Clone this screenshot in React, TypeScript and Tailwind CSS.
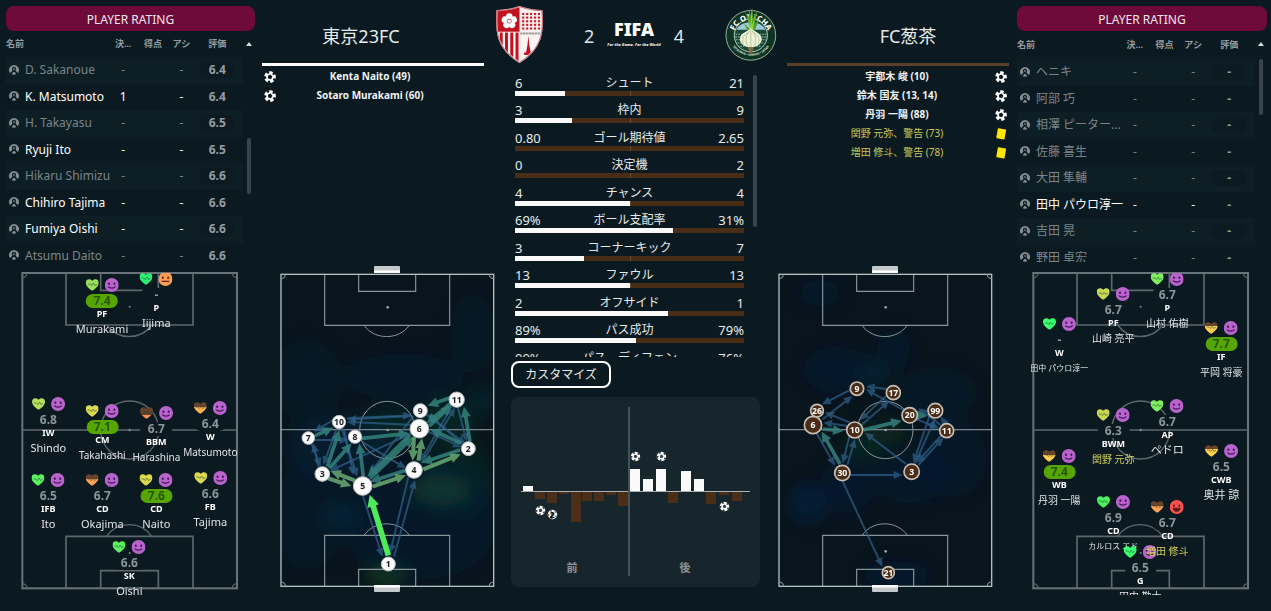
import React, { useId } from "react";

type Rating = { name: string; key: string; assist: string; rating: string; played?: boolean };
type Mood = "happy" | "neutral" | "joy";
type Token = {
  x: number;
  y: number;
  rating: string;
  role: string;
  name: string;
  heart: string;
  drained?: number;
  mood?: Mood;
  booked?: boolean;
  size?: "narrow" | "tiny";
};
type Pass = [number, number, number, number];
type Node = [string, number, number, number];
type Blob = [number, number, number, number, string, number];

const homeRatings: Rating[] = [
  { name: "D. Sakanoue", key: "-", assist: "-", rating: "6.4" },
  { name: "K. Matsumoto", key: "1", assist: "-", rating: "6.4", played: true },
  { name: "H. Takayasu", key: "-", assist: "-", rating: "6.5" },
  { name: "Ryuji Ito", key: "-", assist: "-", rating: "6.5", played: true },
  { name: "Hikaru Shimizu", key: "-", assist: "-", rating: "6.6" },
  { name: "Chihiro Tajima", key: "-", assist: "-", rating: "6.6", played: true },
  { name: "Fumiya Oishi", key: "-", assist: "-", rating: "6.6", played: true },
  { name: "Atsumu Daito", key: "-", assist: "-", rating: "6.6" },
];

const awayRatings: Rating[] = [
  { name: "へニキ", key: "-", assist: "-", rating: "-" },
  { name: "阿部 巧", key: "-", assist: "-", rating: "-" },
  { name: "相澤 ピーター...", key: "-", assist: "-", rating: "-" },
  { name: "佐藤 喜生", key: "-", assist: "-", rating: "-" },
  { name: "大田 隼輔", key: "-", assist: "-", rating: "-" },
  { name: "田中 パウロ淳一", key: "-", assist: "-", rating: "-", played: true },
  { name: "吉田 晃", key: "-", assist: "-", rating: "-" },
  { name: "野田 卓宏", key: "-", assist: "-", rating: "-" },
];

const homeTokens: Token[] = [
  { x: 306, y: 56, rating: "7.4", role: "PF", name: "Murakami", heart: "#9be05a" },
  { x: 469, y: 38, rating: "-", role: "P", name: "Iijima", heart: "#2ef070", mood: "neutral" },
  { x: 145, y: 414, rating: "6.8", role: "IW", name: "Shindo", heart: "#b4e05a" },
  { x: 307, y: 435, rating: "7.1", role: "CM", name: "Takahashi", heart: "#dcd850", size: "narrow" },
  { x: 469, y: 441, rating: "6.7", role: "BBM", name: "Harashina", heart: "#ff8f50", drained: 65, size: "narrow" },
  { x: 631, y: 426, rating: "6.4", role: "W", name: "Matsumoto", heart: "#ffb050", drained: 40, size: "narrow" },
  { x: 145, y: 641, rating: "6.5", role: "IFB", name: "Ito", heart: "#5cf060" },
  { x: 307, y: 641, rating: "6.7", role: "CD", name: "Okajima", heart: "#ff9f50", drained: 38 },
  { x: 469, y: 641, rating: "7.6", role: "CD", name: "Naito", heart: "#dcd850" },
  { x: 631, y: 636, rating: "6.6", role: "FB", name: "Tajima", heart: "#dcd850" },
  { x: 388, y: 843, rating: "6.6", role: "SK", name: "Oishi", heart: "#5cf060" },
];

const awayTokens: Token[] = [
  { x: 307, y: 84, rating: "6.7", role: "PF", name: "山崎 亮平", heart: "#c8d850", size: "narrow" },
  { x: 469, y: 38, rating: "6.7", role: "P", name: "山村 佑樹", heart: "#7ef060", size: "narrow" },
  { x: 145, y: 174, rating: "-", role: "W", name: "田中 パウロ淳一", heart: "#3cff70", size: "tiny" },
  { x: 631, y: 186, rating: "7.7", role: "IF", name: "平岡 将豪", heart: "#ffd050", drained: 35, size: "narrow" },
  { x: 307, y: 448, rating: "6.3", role: "BWM", name: "関野 元弥", heart: "#c8d850", booked: true, size: "narrow" },
  { x: 469, y: 420, rating: "6.7", role: "AP", name: "ペドロ", heart: "#7ef060" },
  { x: 145, y: 570, rating: "7.4", role: "WB", name: "丹羽 一陽", heart: "#ffd050", drained: 40, size: "narrow" },
  { x: 631, y: 555, rating: "6.5", role: "CWB", name: "奥井 諒", heart: "#ffd050", drained: 35 },
  { x: 307, y: 708, rating: "6.9", role: "CD", name: "カルロス エド", heart: "#4cf060", size: "tiny" },
  { x: 388, y: 858, rating: "6.5", role: "G", name: "田中 勘太", heart: "#3cff70", size: "narrow" },
  { x: 469, y: 723, rating: "6.7", role: "CD", name: "増田 修斗", heart: "#ff9f50", drained: 40, mood: "joy", booked: true, size: "narrow" },
];

const stats = [
  { label: "シュート", home: "6", away: "21", share: 22 },
  { label: "枠内", home: "3", away: "9", share: 25 },
  { label: "ゴール期待値", home: "0.80", away: "2.65", share: 0 },
  { label: "決定機", home: "0", away: "2", share: 0 },
  { label: "チャンス", home: "4", away: "4", share: 50 },
  { label: "ボール支配率", home: "69%", away: "31%", share: 69 },
  { label: "コーナーキック", home: "3", away: "7", share: 30 },
  { label: "ファウル", home: "13", away: "13", share: 50 },
  { label: "オフサイド", home: "2", away: "1", share: 67 },
  { label: "パス成功", home: "89%", away: "79%", share: 53 },
  { label: "パス、ディフェン", home: "90%", away: "76%", share: 54 },
];

const momentum: [number, number][] = [
  [12, 6], [24, -7], [36, -11], [48, -2], [60, -30], [71, -9], [83, -9], [95, -3], [107, -14],
  [119, 23], [132, 13], [145, 23], [157, -11], [170, 21], [183, 13], [195, -12], [208, -3], [221, -9],
];

const homeNodes: Node[] = [
  ["1", 355, 912, 21], ["2", 595, 566, 21], ["3", 157, 642, 22], ["4", 432, 630, 25],
  ["5", 278, 678, 28], ["6", 448, 506, 28], ["7", 115, 534, 19], ["8", 255, 530, 20],
  ["9", 451, 452, 21], ["10", 207, 486, 20], ["11", 560, 419, 23],
];
const homeBlue: Pass[] = [
  [230, 475, 425, 466], [425, 468, 232, 478], [420, 494, 230, 486], [125, 552, 152, 620], [145, 620, 130, 550],
  [190, 480, 132, 515], [135, 540, 235, 540], [215, 505, 262, 650], [222, 505, 250, 645], [200, 505, 160, 615],
  [275, 545, 408, 625], [430, 468, 300, 640], [425, 520, 180, 632], [470, 465, 588, 552], [563, 440, 590, 545],
  [475, 515, 575, 562], [455, 610, 555, 443], [545, 440, 450, 605], [575, 550, 475, 462], [372, 890, 435, 660],
  [415, 652, 360, 880], [278, 705, 337, 890],
];
const homeTeal: Pass[] = [
  [275, 535, 418, 520], [300, 655, 430, 530], [420, 525, 292, 650], [280, 650, 268, 550], [178, 625, 245, 550],
  [172, 620, 208, 510], [570, 570, 455, 608], [575, 550, 480, 508], [600, 545, 582, 440], [540, 413, 473, 437],
  [540, 432, 470, 490], [478, 498, 545, 436], [410, 630, 300, 665], [135, 527, 190, 503],
];
const homeGreen: Pass[] = [
  [308, 680, 408, 646], [460, 628, 572, 583], [255, 662, 182, 633], [175, 655, 244, 678],
  [432, 532, 428, 602], [445, 602, 456, 535],
];

const awayNodes: Node[] = [
  ["9", 261, 386, 20], ["17", 370, 398, 21], ["26", 141, 452, 19], ["6", 129, 495, 26],
  ["10", 254, 510, 24], ["20", 419, 466, 23], ["99", 496, 452, 22], ["11", 530, 512, 21],
  ["30", 217, 639, 23], ["3", 425, 635, 23], ["21", 355, 938, 18],
];
const awayBlue: Pass[] = [
  [240, 390, 156, 433], [158, 478, 247, 408], [350, 387, 288, 379], [400, 450, 288, 388], [230, 497, 160, 488],
  [240, 488, 165, 457], [348, 408, 270, 480], [275, 495, 358, 422], [140, 520, 195, 617], [238, 530, 218, 610],
  [232, 615, 255, 537], [408, 612, 285, 518], [240, 645, 397, 645], [445, 615, 520, 533], [435, 610, 494, 478],
  [478, 470, 430, 608], [515, 525, 440, 608], [440, 478, 508, 505], [512, 495, 445, 445], [525, 490, 512, 470],
  [217, 662, 337, 920],
];
const awayTeal: Pass[] = [
  [158, 507, 220, 513], [280, 510, 395, 482], [210, 612, 155, 515], [440, 466, 472, 468],
];

const homeBlobs: Blob[] = [
  [510, 690, 90, 45, "#1d5c1e", 0.5], [350, 945, 60, 30, "#1d5c1e", 0.5], [560, 660, 110, 110, "#0f4a3c", 0.22],
  [210, 770, 60, 50, "#0f3a4a", 0.3], [370, 500, 110, 50, "#124a3a", 0.3], [530, 480, 90, 70, "#124a3a", 0.3],
  [200, 560, 160, 100, "#0c2a5c", 0.25], [450, 780, 240, 180, "#0c2150", 0.25], [110, 770, 110, 160, "#0c2150", 0.2],
  [400, 350, 180, 70, "#0c2150", 0.25], [110, 360, 110, 120, "#0c2150", 0.15], [610, 220, 70, 120, "#0c1f48", 0.2],
  [645, 420, 50, 40, "#0f3a4a", 0.3],
];
const awayBlobs: Blob[] = [
  [340, 520, 80, 30, "#124a2c", 0.35], [280, 565, 55, 35, "#124a2c", 0.3], [310, 340, 50, 40, "#123a5c", 0.3],
  [200, 330, 100, 70, "#0c2150", 0.28], [370, 270, 50, 60, "#0c2150", 0.28], [150, 100, 60, 40, "#0c2150", 0.28],
  [115, 730, 60, 60, "#0c2460", 0.35], [420, 650, 120, 80, "#0c2150", 0.25], [230, 680, 80, 80, "#0c2150", 0.28],
  [550, 590, 100, 120, "#0c2150", 0.22], [380, 945, 100, 40, "#0c2150", 0.35], [500, 400, 120, 80, "#0c2150", 0.2],
];

function PersonIcon() {
  return (
    <svg viewBox="0 0 30 30" className="mb-px h-2.5 w-2.5 shrink-0" aria-hidden="true">
      <path
        d="M15 0A15 15 0 0 0 3 24l6-5c2-2 1-3 0-6-1-5 2-8 6-8s7 3 6 8c-1 3-2 4 0 6l6 5A15 15 0 0 0 15 0z"
        fill="#848e92"
      />
      <path d="M8 28l5-7h4l5 7c-4 2-10 2-14 0z" fill="#848e92" />
      <ellipse cx="15" cy="12" rx="3" ry="4" fill="#5d686c" />
    </svg>
  );
}

function BallShape({ cx, cy, r, dark = "#0b1a20" }: { cx: number; cy: number; r: number; dark?: string }) {
  return (
    <g transform={`translate(${cx} ${cy}) scale(${r / 18}) rotate(12)`}>
      <circle r="18" fill="#fff" />
      <path d="M0-7.500L7-2.300L4.400 6L-4.400 6L-7-2.300z" fill={dark} />
      {[36, 108, 180, 252, 324].map((a) => (
        <path key={a} d="M-5-19L5-19L3-12.500L0-11L-3-12.500z" fill={dark} transform={`rotate(${a})`} />
      ))}
    </g>
  );
}

function BallIcon() {
  return (
    <svg viewBox="-19 -19 38 38" className="h-3 w-3 shrink-0" role="img" aria-label="ゴール">
      <BallShape cx={0} cy={0} r={18.5} />
    </svg>
  );
}

function CardIcon() {
  return (
    <svg viewBox="0 0 36 36" className="h-3 w-3 shrink-0" role="img" aria-label="警告">
      <rect x="6" y="2" width="25" height="31" rx="2" fill="#ffe600" transform="rotate(10 18 18)" />
    </svg>
  );
}

function Heart({ color, drained = 0 }: { color: string; drained?: number }) {
  const id = useId();
  return (
    <svg viewBox="0 0 40 36" className="h-3 w-[13px]" aria-hidden="true">
      <defs>
        <linearGradient id={id} x1="0" y1="0" x2="0" y2="1">
          <stop offset={`${drained}%`} stopColor="#67432c" />
          <stop offset={`${drained}%`} stopColor={color} />
        </linearGradient>
      </defs>
      <path
        d="M20 36C9 28 0 21 0 11 0 3 5 0 10 0c4 0 8 2 10 5 2-3 6-5 10-5 5 0 10 3 10 11 0 10-9 17-20 25z"
        fill={`url(#${id})`}
      />
      <path d="M6 15h8l4 5 5-8 5 8 2-3h4" fill="none" stroke="#12302a" strokeWidth="2" opacity="0.7" />
    </svg>
  );
}

function Face({ mood = "happy" }: { mood?: Mood }) {
  const fill = mood === "happy" ? "#b963cc" : mood === "neutral" ? "#ff9c50" : "#ff5050";
  const ink = mood === "happy" ? "#3b1650" : "#5a1c14";
  return (
    <svg viewBox="0 0 42 42" className="h-3.5 w-3.5" aria-hidden="true">
      <circle cx="21" cy="21" r="21" fill={fill} />
      <ellipse cx="13" cy="17" rx="3" ry="3.5" fill={ink} />
      <ellipse cx="29" cy="17" rx="3" ry="3.5" fill={ink} />
      {mood === "happy" && <path d="M10 26c5 6 17 6 22 0" fill="none" stroke={ink} strokeWidth="3.5" />}
      {mood === "neutral" && <path d="M10 28h22" stroke={ink} strokeWidth="3.5" />}
      {mood === "joy" && <path d="M9 23h24c-1 8-6 12-12 12S10 31 9 23z" fill={ink} />}
    </svg>
  );
}

function HomeCrest() {
  const dots: [number, number][] = [];
  for (let r = 0; r < 5; r++) for (let c = 0; c < 5; c++) dots.push([96 + c * 12, 41 + r * 11]);
  const outline = "M17 31C42 31 63 26 85 19c22 7 43 12 68 12 4 62 3 113-68 157C14 144 13 93 17 31z";
  return (
    <svg viewBox="14 17 142 173" className="h-[57px] w-[47px]" role="img" aria-label="東京23FC">
      <defs>
        <clipPath id="home-shield"><path d={outline} /></clipPath>
      </defs>
      <g clipPath="url(#home-shield)">
        <rect x="10" y="10" width="150" height="180" fill="#f6f3f2" />
        <rect x="10" y="10" width="76" height="86" fill="#c1121f" />
        {[25, 41, 57, 73].map((x) => <rect key={x} x={x} y="97" width="9" height="95" fill="#c1121f" />)}
        {dots.map(([x, y]) => <rect key={`${x}-${y}`} x={x - 3} y={y - 3} width="6.500" height="6.500" fill="#cc1f2c" />)}
        <path d="M86 96h70v9H86z" fill="#d8d2cf" />
        <path d="M88 100h64" stroke="#6b6664" strokeWidth="3" strokeDasharray="4 5" />
        <path d="M112 108l3 28 4 22h6v8H99v-8h6l4-22z" fill="#c1121f" />
        <path d="M10 96h76M86 10v180" stroke="#f1dcdc" strokeWidth="2" />
      </g>
      {[0, 72, 144, 216, 288].map((a) => (
        <circle key={a} cx="54" cy="49" r="10" fill="#fff" transform={`rotate(${a} 54 63)`} />
      ))}
      <circle cx="54" cy="63" r="7" fill="#c1121f" />
      <path d="M54 57l6 4-2 7h-8l-2-7z" fill="#fff" />
      <path d={outline} fill="none" stroke="#f3e8e8" strokeWidth="4" />
      <path d={outline} fill="none" stroke="#b31320" strokeWidth="1.8" />
    </svg>
  );
}

function AwayCrest() {
  return (
    <svg viewBox="706 22 157 165" className="h-[55px] w-[52px]" role="img" aria-label="FC葱茶">
      <defs>
        <path id="crest-top" d="M731 106a54 54 0 0 1 107 0" />
        <path id="crest-low" d="M718 110a67 67 0 0 0 133 0" />
      </defs>
      <circle cx="784" cy="107" r="77" fill="#0f3423" />
      <circle cx="784" cy="107" r="75" fill="none" stroke="#d8e6dc" strokeWidth="2" />
      <circle cx="784" cy="107" r="50" fill="#174a35" stroke="#dbe8e0" strokeWidth="2.5" />
      <path d="M740 90c14-30 74-30 88 0z" fill="#9fc9d8" />
      <path d="M738 104h92M737 112h94M739 120h90M744 130h80M752 140h64" stroke="#7d988c" strokeWidth="4" strokeDasharray="5 3" />
      <text fontSize="23" fontWeight="800" fill="#fff" fontFamily="Noto Sans" textAnchor="middle">
        <textPath href="#crest-top" startOffset="50%">FC ONICHA</textPath>
      </text>
      <text fontSize="9" fontWeight="700" fill="#d8e6dc" fontFamily="Noto Sans" textAnchor="middle">
        <textPath href="#crest-low" startOffset="50%">SETSUDEN • IBARAKI • JAPAN</textPath>
      </text>
      <path d="M784 92L766 34l11 18 2-28 4 28 5-30 3 32 13-22-8 38 12-10-16 42h-13l-16-32z" fill="#4f9a27" />
      <path d="M782 94l-7-50 8 34 3-52 3 50 8-32-7 50z" fill="#8fcf3e" />
      <path d="M784 84c4 10 33 14 33 34 0 16-17 25-33 25s-33-9-33-25c0-20 29-24 33-34z" fill="#eef3da" />
      <path d="M784 88v55M780 94c-12 14-14 32-5 46M788 94c12 14 14 32 5 46M776 99c-17 8-20 22-14 34M792 99c17 8 20 22 14 34" fill="none" stroke="#9fb27a" strokeWidth="2" />
      <path d="M774 142l10 24 10-24z" fill="#8a6a44" />
    </svg>
  );
}

function RatingPanel({ label, rows, away = false }: { label: string; rows: Rating[]; away?: boolean }) {
  return (
    <div>
      <button type="button" className="mt-1.5 block h-[25px] w-full rounded-lg bg-[#6e0a3a] pt-0.5 text-xs text-[#f0e6ea]">
        PLAYER RATING
      </button>
      <div className="flex h-[231px] overflow-hidden">
        <table aria-label={label} className={`w-full table-fixed border-collapse text-xs leading-4 ${away ? "h-[240px]" : "h-[238px]"}`}>
          <thead>
            <tr className={`text-[9px] text-[#949da1] ${away ? "h-7" : "h-[26px]"}`}>
              <th className="w-[43%] p-0 text-left">名前</th>
              <th className="w-[13%] p-0">決...</th>
              <th className="w-[12%] p-0">得点</th>
              <th className="w-[12%] p-0">アシ</th>
              <th className="w-[20%] p-0 pr-1">評価</th>
            </tr>
          </thead>
          <tbody>
            {rows.map((row) => (
              <tr key={row.name} className={`group odd:bg-[#0d1e25] ${row.played ? "text-white" : "text-[#7b8589]"}`}>
                <td className="p-0 whitespace-nowrap">
                  <div className="flex items-center gap-1.5 pl-[3px]"><PersonIcon />{row.name}</div>
                </td>
                <td className="p-0 text-center">{row.key}</td>
                <td className="p-0" />
                <td className="p-0 text-center">{row.assist}</td>
                <td className="p-0 pr-1 text-center font-bold text-[#949da1]">
                  <div className="mx-auto h-4 w-9 rounded-full group-odd:bg-[#0b1b21]">{row.rating}</div>
                </td>
              </tr>
            ))}
          </tbody>
        </table>
        <div className="flex w-3 shrink-0 flex-col items-center pt-[11px]">
          <svg viewBox="0 0 6 4" className="h-1 w-1.5" aria-hidden="true"><path d="M3 0l3 4H0z" fill="#d5dadc" /></svg>
          <div className={`h-14 w-1 rounded-full bg-[#39454a] ${away ? "mt-[13px]" : "mt-[92px]"}`} />
        </div>
      </div>
    </div>
  );
}

function Formation({ tokens }: { tokens: Token[] }) {
  return (
    <div className="relative">
      <svg viewBox="0 0 780 1038" className="block w-full" aria-hidden="true">
        <g fill="none" stroke="#5d686d" strokeWidth="5">
          <rect x="67" y="21" width="644" height="946" stroke="#69747a" strokeWidth="6" />
          <path d="M67 492H711M198 21V177H579V21M302 21V73H475V21M198 967V811H579V967M302 967V914H475V967" />
          <path d="M320 177C352 223 423 223 455 177M320 811C352 764 423 764 455 811" strokeWidth="4" />
          <circle cx="389" cy="492" r="87" strokeWidth="4" />
          <path d="M81 21a14 14 0 0 1-14 14M697 21a14 14 0 0 0 14 14M81 967a14 14 0 0 0-14-14M697 967a14 14 0 0 1 14-14" strokeWidth="4" />
        </g>
        <g fill="#7a8589">
          <circle cx="389" cy="122" r="3" /><circle cx="389" cy="492" r="4" /><circle cx="389" cy="861" r="3" />
        </g>
      </svg>
      <div className="absolute inset-x-0 top-[2.1%] bottom-[4.9%] overflow-hidden">
        {tokens.map((t) => {
          const high = parseFloat(t.rating) >= 7;
          const size = t.size === "tiny" ? "text-[8px]" : t.size === "narrow" ? "text-[10px]" : "text-[11px]";
          return (
            <div
              key={t.name}
              className="absolute -mt-[7px] flex -translate-x-1/2 flex-col items-center"
              style={{ left: `${(t.x / 780) * 100}%`, top: `${((t.y - 22) / 965) * 100}%` }}
            >
              <div className="flex h-3.5 items-center gap-1.5"><Heart color={t.heart} drained={t.drained} /><Face mood={t.mood} /></div>
              <div className={`mt-0.5 h-3.5 w-8 rounded-full text-center text-xs leading-[14px] font-bold ${high ? "bg-[#56a600] text-[#2a5508]" : "bg-[#0b1a20] text-[#8c969a]"}`}>
                {t.rating}
              </div>
              <div className="mt-px text-[9px] leading-[10px] font-bold text-white">{t.role}</div>
              <div className={`mt-0.5 leading-4 whitespace-nowrap ${size} ${t.booked ? "text-[#d2cf5a]" : "text-[#dfe4e6]"}`}>{t.name}</div>
            </div>
          );
        })}
      </div>
    </div>
  );
}

function Arrow({ pass, color, width, opacity = 1 }: { pass: Pass; color: string; width: number; opacity?: number }) {
  const [x1, y1, x2, y2] = pass;
  const len = Math.hypot(x2 - x1, y2 - y1);
  const angle = (Math.atan2(y2 - y1, x2 - x1) * 180) / Math.PI;
  const head = width > 12 ? 36 : width > 8 ? 31 : 26;
  const half = width > 12 ? 18 : width > 8 ? 15 : 12;
  return (
    <path
      transform={`translate(${x1} ${y1}) rotate(${angle})`}
      d={`M0 ${-width / 2}H${len - head}V${-half}L${len} 0L${len - head} ${half}V${width / 2}H0z`}
      fill={color}
      opacity={opacity}
    />
  );
}

function PassMap({ away = false }: { away?: boolean }) {
  const nodes = away ? awayNodes : homeNodes;
  const blobs = away ? awayBlobs : homeBlobs;
  const prefix = away ? "away" : "home";
  return (
    <svg viewBox={away ? "-6 0 729 1020" : "-30 0 729 1020"} className="block w-full" role="img" aria-label={away ? "FC葱茶 パスマップ" : "東京23FC パスマップ"}>
      <defs>
        <clipPath id={`${prefix}-field`}><rect x={away ? 27 : 33} y="43" width="639" height="936" /></clipPath>
        <filter id={`${prefix}-soft`} x="-50%" y="-50%" width="200%" height="200%"><feGaussianBlur stdDeviation="24" /></filter>
      </defs>
      <g clipPath={`url(#${prefix}-field)`}>
        <rect x="20" y="30" width="670" height="960" fill="#08151c" />
        <g filter={`url(#${prefix}-soft)`}>
          {blobs.map(([x, y, rx, ry, fill, o]) => (
            <ellipse key={`${x}-${y}`} cx={x} cy={y} rx={rx} ry={ry} fill={fill} opacity={o} />
          ))}
        </g>
      </g>
      <g transform={away ? "translate(-6 0)" : undefined}>
        <g fill="none" stroke="#87959a" strokeWidth="3.5">
          <path d="M164 43V196H539V43M266 43V94H437V43M164 979V826H539V979M266 979V928H437V979" />
          <path d="M282 196C314 241 386 241 418 196M282 826C314 780 386 780 418 826" strokeWidth="3" />
          <ellipse cx="352" cy="510" rx="83" ry="86" strokeWidth="3" />
          <path d="M33 509H672" stroke="#7d838d" strokeWidth="4" />
          <rect x="33" y="43" width="638" height="936" stroke="#b4bfc0" strokeWidth="4" />
          <path d="M46 43a13 13 0 0 1-13 13M658 43a13 13 0 0 0 13 13M46 979a13 13 0 0 0-13-13M658 979a13 13 0 0 1 13-13" />
        </g>
        <g fill="#9aa5a9"><circle cx="353" cy="142" r="4" /><circle cx="353" cy="510" r="4" /><circle cx="353" cy="874" r="4" /></g>
        <rect x="312" y="18" width="78" height="21" rx="3" fill="#c3c9cb" /><path d="M312 35H390" stroke="#fff" strokeWidth="7" />
        <rect x="312" y="975" width="78" height="21" rx="3" fill="#c3c9cb" /><path d="M312 979H390" stroke="#fff" strokeWidth="7" />
      </g>
      {(away ? awayBlue : homeBlue).map((p, i) => <Arrow key={i} pass={p} color="#2f5f88" width={6} opacity={0.72} />)}
      {(away ? awayTeal : homeTeal).map((p, i) => <Arrow key={i} pass={p} color="#34817c" width={11} opacity={0.85} />)}
      {!away && homeGreen.map((p, i) => <Arrow key={i} pass={p} color="#629f6c" width={12} opacity={0.92} />)}
      {!away && <Arrow pass={[355, 886, 299, 704]} color="#4fe95c" width={17} />}
      {nodes.map(([n, x, y, r]) => (
        <g key={n}>
          <circle cx={x} cy={y} r={r} fill={away ? "#4b2d17" : "#fafafa"} stroke={away ? "#c9bfb4" : "#b9bcbe"} strokeWidth={away ? 5 : 3} />
          <text x={x} y={y + 9} textAnchor="middle" fontSize="26" fontWeight="700" fill={away ? "#fff" : "#151a20"}>{n}</text>
        </g>
      ))}
    </svg>
  );
}

function Momentum() {
  return (
    <div className="mt-[9px] rounded-lg bg-[#17252c]">
      <svg viewBox="0 0 249 190" className="block w-full" role="img" aria-label="試合の流れ">
        {momentum.map(([x, v]) => (
          <rect key={x} x={x} y={v > 0 ? 94 - v + 1 : 95} width="10" height={Math.abs(v)} fill={v > 0 ? "#fafafa" : "#4a2e18"} />
        ))}
        <rect x="10" y="94" width="229" height="1" fill="#a9b0b3" />
        <rect x="117" y="10" width="2" height="169" fill="#475258" />
        <BallShape cx={29.5} cy={113.5} r={4.7} dark="#39454a" />
        <BallShape cx={41.5} cy={117.5} r={4.7} dark="#6c777b" />
        <text x="41" y="121" fontSize="9" fontWeight="700" textAnchor="middle" fill="#000">2</text>
        <BallShape cx={124.5} cy={59.5} r={4.7} dark="#39454a" />
        <BallShape cx={150.5} cy={59.5} r={4.7} dark="#39454a" />
        <BallShape cx={213.5} cy={109.5} r={4.7} dark="#39454a" />
        <g fontSize="11" fontWeight="700" fill="#8d979b" textAnchor="middle">
          <text x="61" y="175">前</text>
          <text x="174" y="175">後</text>
        </g>
      </svg>
    </div>
  );
}

function Stats() {
  return (
    <section className="flex flex-col px-2">
      <div className="mt-[9px] flex h-[282px] items-start overflow-hidden pl-1">
        <div className="grid h-[302px] flex-1 auto-rows-fr">
          {stats.map((s) => (
            <div key={s.label}>
              <div className="grid grid-cols-[1fr_auto_1fr] text-[13px] leading-4 text-[#e6eaeb]">
                <span>{s.home}</span>
                <span className="text-xs leading-4">{s.label}</span>
                <span className="text-right">{s.away}</span>
              </div>
              <div className="grid h-[5px] grid-cols-2 bg-[#4a2d17]">
                <div className="col-span-2 col-start-1 row-start-1 h-[5px] bg-[#fafafa]" style={{ width: `${s.share}%` }} />
                {s.share <= 50 && <div className="col-start-2 row-start-1 h-[5px] border-l border-[#66492f]" />}
              </div>
            </div>
          ))}
        </div>
        <div className="mr-[3px] ml-[9px] h-[152px] w-1 rounded-full bg-[#39454a]" />
      </div>
      <button type="button" className="mt-1 h-[27px] w-[100px] rounded-lg border-2 border-white pt-px text-xs text-[#e6eaeb]">
        カスタマイズ
      </button>
      <Momentum />
    </section>
  );
}

const homeEvents = ["Kenta Naito (49)", "Sotaro Murakami (60)"];
const awayEvents = [
  { text: "宇都木 峻 (10)" },
  { text: "鈴木 国友 (13, 14)" },
  { text: "丹羽 一陽 (88)" },
  { text: "関野 元弥、警告 (73)", card: true },
  { text: "増田 修斗、警告 (78)", card: true },
];

export default function App() {
  return (
    <div
      lang="ja"
      className="grid min-h-screen grid-cols-[260fr_751fr_260fr] bg-[#0b1a20] font-['Noto_Sans','Noto_Sans_CJK_JP',sans-serif] text-white"
    >
      <aside className="min-w-0">
        <div className="pr-[5px] pl-1.5"><RatingPanel label="東京23FC 選手評価" rows={homeRatings} /></div>
        <div className="mt-1"><Formation tokens={homeTokens} /></div>
      </aside>

      <main className="min-w-0">
        <header className="grid h-[66px] grid-cols-[226fr_299fr_226fr]">
          <h2 className="mx-0.5 flex items-center justify-center border-b-[3px] border-white pt-2 pr-6 text-lg text-[#e6eaeb]">
            東京23FC
          </h2>
          <div className="flex items-center justify-between pt-0.5 pr-2 pl-2.5">
            <HomeCrest />
            <div className="flex items-center gap-[13px] pt-1">
              <span className="text-lg text-[#dfe4e6]">2</span>
              <div className="flex flex-col items-center gap-0.5 pb-1">
                <div className="text-lg leading-5 font-black">FIFA</div>
                <div className="text-[4px] leading-2 font-bold italic">For the Game. For the World</div>
              </div>
              <span className="text-lg text-[#dfe4e6]">4</span>
            </div>
            <AwayCrest />
          </div>
          <h2 className="mx-0.5 flex items-center justify-center border-b-[3px] border-[#5a3f2a] pt-2 pl-5 text-lg text-[#e6eaeb]">
            FC葱茶
          </h2>
        </header>

        <div className="grid grid-cols-[243fr_265fr_243fr]">
          <section className="min-w-0">
            <ul className="mr-[19px] ml-0.5 h-[194px] pt-px text-[10px] leading-[19px]">
              {homeEvents.map((e) => (
                <li key={e} className="flex items-center pl-0.5">
                  <BallIcon />
                  <span className="flex-1 pr-5 text-center font-bold text-[#f0f3f4]">{e}</span>
                </li>
              ))}
            </ul>
            <PassMap />
          </section>
          <Stats />
          <section className="min-w-0">
            <ul className="mr-0.5 ml-[19px] h-[194px] pt-px text-[10px] leading-[19px]">
              {awayEvents.map((e) => (
                <li key={e.text} className="flex items-center pr-0.5">
                  <span className={`flex-1 pl-3 text-center ${e.card ? "text-[#c9c65c]" : "font-bold text-[#f0f3f4]"}`}>{e.text}</span>
                  {e.card ? <CardIcon /> : <BallIcon />}
                </li>
              ))}
            </ul>
            <PassMap away />
          </section>
        </div>
      </main>

      <aside className="min-w-0">
        <div className="pr-1 pl-1.5"><RatingPanel label="FC葱茶 選手評価" rows={awayRatings} away /></div>
        <div className="mt-1"><Formation tokens={awayTokens} /></div>
      </aside>
    </div>
  );
}
